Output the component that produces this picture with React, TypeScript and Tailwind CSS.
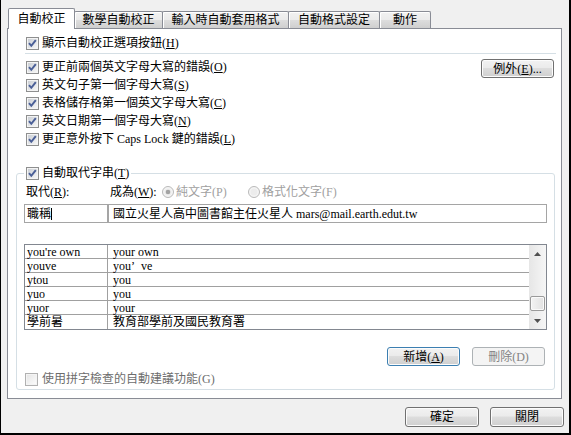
import React from 'react'

const btn =
  'flex items-center justify-center rounded-[3px] border bg-[linear-gradient(to_bottom,#f2f2f2_0%,#ebebeb_45%,#dddddd_50%,#cfcfcf_100%)] shadow-[inset_0_0_0_1px_#fcfcfc]'

function U({ c }: { c: string }) {
  return (
    <>
      (<span className="underline underline-offset-[1px]">{c}</span>)
    </>
  )
}

function Check({ checked = true, disabled = false }: { checked?: boolean; disabled?: boolean }) {
  return (
    <svg width="13" height="13" viewBox="0 0 13 13" className="shrink-0">
      <defs>
        <linearGradient id={disabled ? 'cbd' : 'cb'} x1="0" y1="0" x2="1" y2="1">
          <stop offset="0" stopColor={disabled ? '#e6e6e6' : '#cbcfd5'} />
          <stop offset="1" stopColor={disabled ? '#fbfbfb' : '#f6f6f6'} />
        </linearGradient>
      </defs>
      <rect x="0.5" y="0.5" width="12" height="12" fill="#f4f4f4" stroke={disabled ? '#b1b1b1' : '#8e8f8f'} />
      <rect x="2" y="2" width="9" height="9" fill={`url(#${disabled ? 'cbd' : 'cb'})`} />
      {checked && (
        <path d="M3 6.2 L5.3 8.8 L9.8 3.2" fill="none" stroke="#4a5f97" strokeWidth="2" />
      )}
    </svg>
  )
}

function Radio({ checked = false }: { checked?: boolean }) {
  return (
    <svg width="12" height="12" viewBox="0 0 12 12" className="shrink-0">
      <circle cx="6" cy="6" r="5.5" fill="#f4f4f4" stroke="#b9b9b9" />
      <circle cx="6" cy="6" r="3.5" fill="#ececec" />
      {checked && <circle cx="6" cy="6" r="2.3" fill="#a3a3a3" />}
    </svg>
  )
}

const rows = [
  ['更正前兩個英文字母大寫的錯誤', 'O'],
  ['英文句子第一個字母大寫', 'S'],
  ['表格儲存格第一個英文字母大寫', 'C'],
  ['英文日期第一個字母大寫', 'N'],
  ['更正意外按下 Caps Lock 鍵的錯誤', 'L'],
]

const entries: [string, React.ReactNode][] = [
  ["you're own", 'your own'],
  ['youve', <>you<span className="inline-block w-[10px]">’</span>ve</>],
  ['ytou', 'you'],
  ['yuo', 'you'],
  ['yuor', 'your'],
  ['學前暑', '教育部學前及國民教育署'],
]

const tabs = [
  { label: '自動校正', w: 'w-[67px]' },
  { label: '數學自動校正', w: 'w-[89px]' },
  { label: '輸入時自動套用格式', w: 'w-[127px]' },
  { label: '自動格式設定', w: 'w-[92px]' },
  { label: '動作', w: 'w-[52px]' },
]

export default function App() {
  return (
    <div className="w-[571px] h-[435px] bg-[#f0f0f0] border-l border-r-2 border-b-2 border-black pt-[8px] text-[12px] leading-[14px] text-black font-['Liberation_Serif','Noto_Sans_CJK_TC',serif] overflow-hidden">
      {/* tabs */}
      <div className="flex items-end h-[20px] ml-[7px]">
        <div className="relative z-10 flex items-center justify-center w-[67px] h-[21px] -mb-px bg-white border border-b-0 border-[#898c95] rounded-t-[2px]">
          自動校正
        </div>
        {tabs.slice(1).map((t) => (
          <div
            key={t.label}
            className={`-ml-px flex items-center justify-center ${t.w} h-[17px] border border-b-0 border-[#898c95] rounded-t-[2px] bg-[linear-gradient(to_bottom,#f2f2f2_0%,#ebebeb_50%,#dddddd_51%,#cfcfcf_100%)] shadow-[inset_1px_1px_0_#fff]`}
          >
            {t.label}
          </div>
        ))}
      </div>

      {/* panel */}
      <div className="ml-[6px] w-[555px] h-[371px] border border-[#898c95] bg-white flex flex-col">
        <div className="mt-[7px] h-[14px] pl-[18px] flex items-center gap-[3px]">
          <Check />
          <span>
            顯示自動校正選項按鈕<U c="H" />
          </span>
        </div>
        <div className="mt-[3px] h-px ml-[17px] mr-[5px] bg-[#d5dfe5]" />

        <div className="mt-[4px] flex justify-between">
          <div className="pl-[18px] flex flex-col">
            {rows.map(([t, k]) => (
              <div key={k} className="h-[18px] flex items-center gap-[3px]">
                <Check />
                <span>
                  {t}
                  <U c={k} />
                </span>
              </div>
            ))}
          </div>
          <div className={`${btn} border-[#707070] mt-px mr-[7px] w-[73px] h-[19px]`}>
            例外<U c="E" />...
          </div>
        </div>

        {/* group */}
        <div className="relative mt-[25px] ml-[8px] w-[539px] h-[217px] border border-[#d5dfe5] rounded-[3px] flex flex-col">
          <div className="absolute -top-[8px] left-[7px] px-[2px] h-[14px] bg-white flex items-center gap-[3px]">
            <Check />
            <span>
              自動取代字串<U c="T" />
            </span>
          </div>

          <div className="mt-[11px] h-[14px] pl-[9px] flex items-center">
            <span className="w-[84px]">
              取代<U c="R" />:
            </span>
            <span className="w-[52px]">
              成為<U c="W" />:
            </span>
            <span className="w-[86px] flex items-center gap-[2px] text-[#a0a0a0]">
              <Radio checked />
              純文字(P)
            </span>
            <span className="flex items-center gap-[2px] text-[#a0a0a0]">
              <Radio />
              格式化文字(F)
            </span>
          </div>

          <div className="mt-[5px] pl-[7px] flex h-[19px]">
            <div className="w-[84px] h-full border border-[#a5a5a5] flex items-center pl-[2px]">
              職稱<span className="w-px h-[12px] bg-black" />
            </div>
            <div className="w-[439px] h-full border border-[#a5a5a5] flex items-center pl-[4px]">
              國立火星人高中圖書館主任火星人 mars@mail.earth.edut.tw
            </div>
          </div>

          {/* list */}
          <div className="mt-[21px] ml-[7px] w-[523px] h-[86px] border border-[#828790] flex">
            <div className="flex-1 flex flex-col">
              {entries.map(([a, b], i) => (
                <div
                  key={a}
                  className={`h-[14px] flex ${i < entries.length - 1 ? 'border-b border-[#a0a0a0]' : ''}`}
                >
                  <div className="w-[83px] border-r border-[#a0a0a0] pl-[2px] flex items-center">{a}</div>
                  <div className="pl-[5px] flex items-center">{b}</div>
                </div>
              ))}
            </div>
            <div className="w-[17px] flex flex-col bg-[linear-gradient(to_right,#e6e6e6,#f6f6f6)]">
              <div className="h-[17px] flex items-center justify-center">
                <svg width="7" height="4" viewBox="0 0 7 4">
                  <path d="M0 4 L3.5 0 L7 4 Z" fill="#505050" />
                </svg>
              </div>
              <div className="flex-1 flex flex-col justify-end pb-px">
                <div className="h-[15px] mx-px rounded-[2px] border border-[#9a9a9a] bg-[linear-gradient(to_right,#f3f3f3,#e2e2e2)] shadow-[inset_0_0_0_1px_#fafafa]" />
              </div>
              <div className="h-[17px] flex items-center justify-center">
                <svg width="7" height="4" viewBox="0 0 7 4">
                  <path d="M0 0 L7 0 L3.5 4 Z" fill="#505050" />
                </svg>
              </div>
            </div>
          </div>

          <div className="mt-[17px] pr-[9px] flex justify-end gap-[12px]">
            <div className={`${btn} border-[#3c7fb1] shadow-[inset_0_0_0_1px_#c4e5f6] w-[73px] h-[19px]`}>
              新增<U c="A" />
            </div>
            <div className="flex items-center justify-center rounded-[3px] border border-[#adb2b5] bg-[#f4f4f4] text-[#838383] w-[73px] h-[19px]">
              刪除(D)
            </div>
          </div>

          <div className="mt-[6px] h-[14px] pl-[8px] flex items-center gap-[4px] text-[#6d6d6d]">
            <Check checked={false} disabled />
            <span>使用拼字檢查的自動建議功能(G)</span>
          </div>
        </div>
      </div>

      {/* footer */}
      <div className="mt-[8px] mr-[5px] flex justify-end gap-[11px]">
        <div className={`${btn} border-[#707070] w-[74px] h-[20px]`}>確定</div>
        <div className={`${btn} border-[#707070] w-[74px] h-[20px]`}>關閉</div>
      </div>
    </div>
  )
}
